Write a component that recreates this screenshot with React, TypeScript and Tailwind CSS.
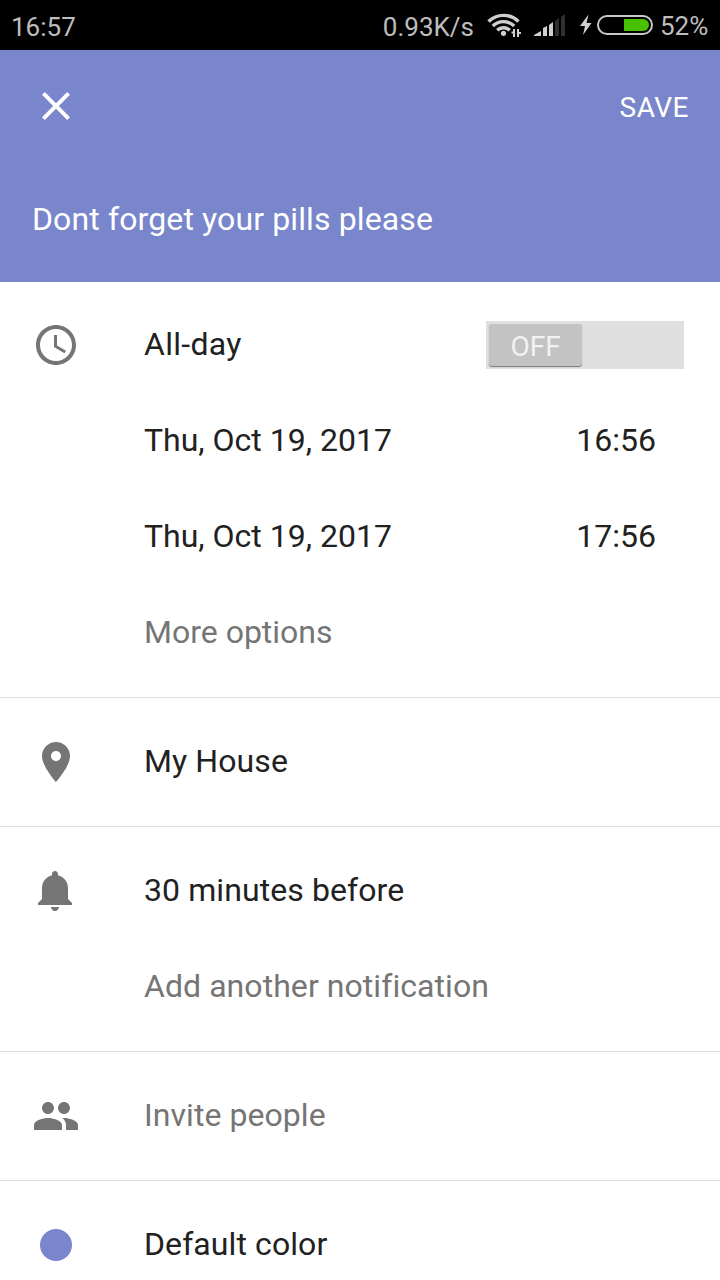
import type { ReactNode } from 'react';

function Icon({ d }: { d: string }) {
  return (
    <svg viewBox="0 0 24 24" className="size-12 shrink-0" fill="currentColor">
      <path d={d} />
    </svg>
  );
}

const icons = {
  close:
    'M19 6.41L17.59 5 12 10.59 6.41 5 5 6.41 10.59 12 5 17.59 6.41 19 12 13.41 17.59 19 19 17.59 13.41 12z',
  clock:
    'M11.99 2C6.47 2 2 6.48 2 12s4.47 10 9.99 10C17.52 22 22 17.52 22 12S17.52 2 11.99 2zM12 20c-4.42 0-8-3.58-8-8s3.58-8 8-8 8 3.58 8 8-3.58 8-8 8zM12.5 7H11v6l5.25 3.15.75-1.23-4.5-2.67z',
  place:
    'M12 2C8.13 2 5 5.13 5 9c0 5.25 7 13 7 13s7-7.75 7-13c0-3.87-3.13-7-7-7zm0 9.5c-1.38 0-2.5-1.12-2.5-2.5s1.12-2.5 2.5-2.5 2.5 1.12 2.5 2.5-1.12 2.5-2.5 2.5z',
  bell:
    'M11.5 22c1.1 0 2-.9 2-2h-4c0 1.1.9 2 2 2zm6.5-6v-5.5c0-3.07-2.13-5.64-5-6.32V3.5c0-.83-.67-1.5-1.5-1.5S10 2.67 10 3.5v.68c-2.87.68-5 3.25-5 6.32V16l-2 2v1h17v-1l-2-2z',
  people:
    'M16 11c1.66 0 2.99-1.34 2.99-3S17.66 5 16 5c-1.66 0-3 1.34-3 3s1.34 3 3 3zm-8 0c1.66 0 2.99-1.34 2.99-3S9.66 5 8 5C6.34 5 5 6.34 5 8s1.34 3 3 3zm0 2c-2.33 0-7 1.17-7 3.5V19h14v-2.5c0-2.33-4.67-3.5-7-3.5zm8 0c-.29 0-.62.02-.97.05 1.16.84 1.97 1.97 1.97 3.45V19h6v-2.5c0-2.33-4.67-3.5-7-3.5z',
};

function StatusBar() {
  return (
    <div className="flex h-[50px] items-center bg-black pr-3 pl-[11px] text-[26px] text-[#bdbdbd]">
      <span className="pt-[3px]">16:57</span>
      <span className="ml-auto pt-[3px]">0.93K/s</span>
      <svg viewBox="486 0 110 50" className="ml-3 h-[50px] w-[110px] shrink-0">
        <g fill="none" stroke="#d0d0d0" strokeWidth="3.4">
          <path d="M488.5 21.5A21.5 21.5 0 0 1 518.5 21.5" />
          <path d="M492.8 26A15.2 15.2 0 0 1 514.2 26" />
          <path d="M497.2 30.3A9 9 0 0 1 509.8 30.3" />
        </g>
        <circle cx="503.5" cy="33.3" r="2.6" fill="#d0d0d0" />
        <path d="M514 29v8M518 29v8" stroke="#d0d0d0" strokeWidth="2" />
        <path d="M511.5 32.5h2M518 33h3" stroke="#d0d0d0" strokeWidth="2" />
        <path
          d="M534 36v-1l7-4v5zM543 36v-8l4-2v10zM549 36V25l4-3v14z"
          fill="#d0d0d0"
        />
        <path d="M555 36V21l4-3v18zM561 36V17l4-3v22z" fill="#303030" />
        <path d="M588.5 14.5L580 26h5l-2 9 8.500-12H586.500z" fill="#d0d0d0" />
      </svg>
      <div className="ml-px flex h-5 w-14 shrink-0 items-center justify-end rounded-full border-2 border-[#c8c8c8] p-0.5">
        <div className="h-3 w-[25px] rounded-r-full bg-[#48c200]" />
      </div>
      <span className="ml-[7px] w-[48px] pt-0.5 text-[26px]">52%</span>
    </div>
  );
}

function Row({ icon, children }: { icon?: ReactNode; children: ReactNode }) {
  return (
    <div className="flex h-24 items-center pr-9 pl-8">
      <div className="flex w-28 shrink-0 text-[#757575]">{icon}</div>
      {children}
    </div>
  );
}

function Label({ muted, children }: { muted?: boolean; children: ReactNode }) {
  return (
    <span className={muted ? 'pb-0.5 tracking-[0.06px] text-[#757575]' : 'pb-0.5 tracking-[0.09px]'}>
      {children}
    </span>
  );
}

function Section({ children }: { children: ReactNode }) {
  return <section className="border-b border-[#dedede] py-4">{children}</section>;
}

function DateRow({ date, time }: { date: string; time: string }) {
  return (
    <Row>
      <span className="pb-0.5">{date}</span>
      <span className="mr-7 ml-auto pb-0.5">{time}</span>
    </Row>
  );
}

export default function App() {
  return (
    <div className="h-[1280px] w-[720px] overflow-hidden bg-white font-['Roboto',sans-serif] text-[32px] leading-none whitespace-nowrap text-[#212121]">
      <StatusBar />
      <header className="h-[232px] bg-[#7986cb] text-white">
        <div className="flex h-28 items-center justify-between pr-[31px] pl-8">
          <Icon d={icons.close} />
          <span className="pt-1 text-[28px] tracking-[0.5px]">SAVE</span>
        </div>
        <div className="flex h-28 items-center pt-0.5 pl-8 tracking-[0.12px]">
          Dont forget your pills please
        </div>
      </header>
      <section className="border-b border-[#dedede] pt-[15px] pb-4">
        <Row icon={<Icon d={icons.clock} />}>
          <span className="pb-0.5 tracking-[0.3px]">All-day</span>
          <div className="ml-auto flex h-12 w-[198px] items-start bg-[#dfdfdf] py-[3px] pl-[3px]">
            <div className="flex h-[42px] w-[93px] items-center justify-center rounded-[3px] bg-[#c3c3c3] pt-[3px] text-[28px] text-[#f2f2f2] shadow-[0_1px_1px_#777]">
              OFF
            </div>
          </div>
        </Row>
        <DateRow date="Thu, Oct 19, 2017" time="16:56" />
        <DateRow date="Thu, Oct 19, 2017" time="17:56" />
        <Row>
          <span className="pb-0.5 text-[#757575]">More options</span>
        </Row>
      </section>
      <Section>
        <Row icon={<Icon d={icons.place} />}>
          <Label>My House</Label>
        </Row>
      </Section>
      <Section>
        <Row icon={<Icon d={icons.bell} />}>
          <Label>30 minutes before</Label>
        </Row>
        <Row>
          <Label muted>Add another notification</Label>
        </Row>
      </Section>
      <Section>
        <Row icon={<Icon d={icons.people} />}>
          <Label muted>Invite people</Label>
        </Row>
      </Section>
      <Section>
        <Row icon={<div className="m-2 size-8 rounded-full bg-[#7986cb]" />}>
          <Label>Default color</Label>
        </Row>
      </Section>
    </div>
  );
}
